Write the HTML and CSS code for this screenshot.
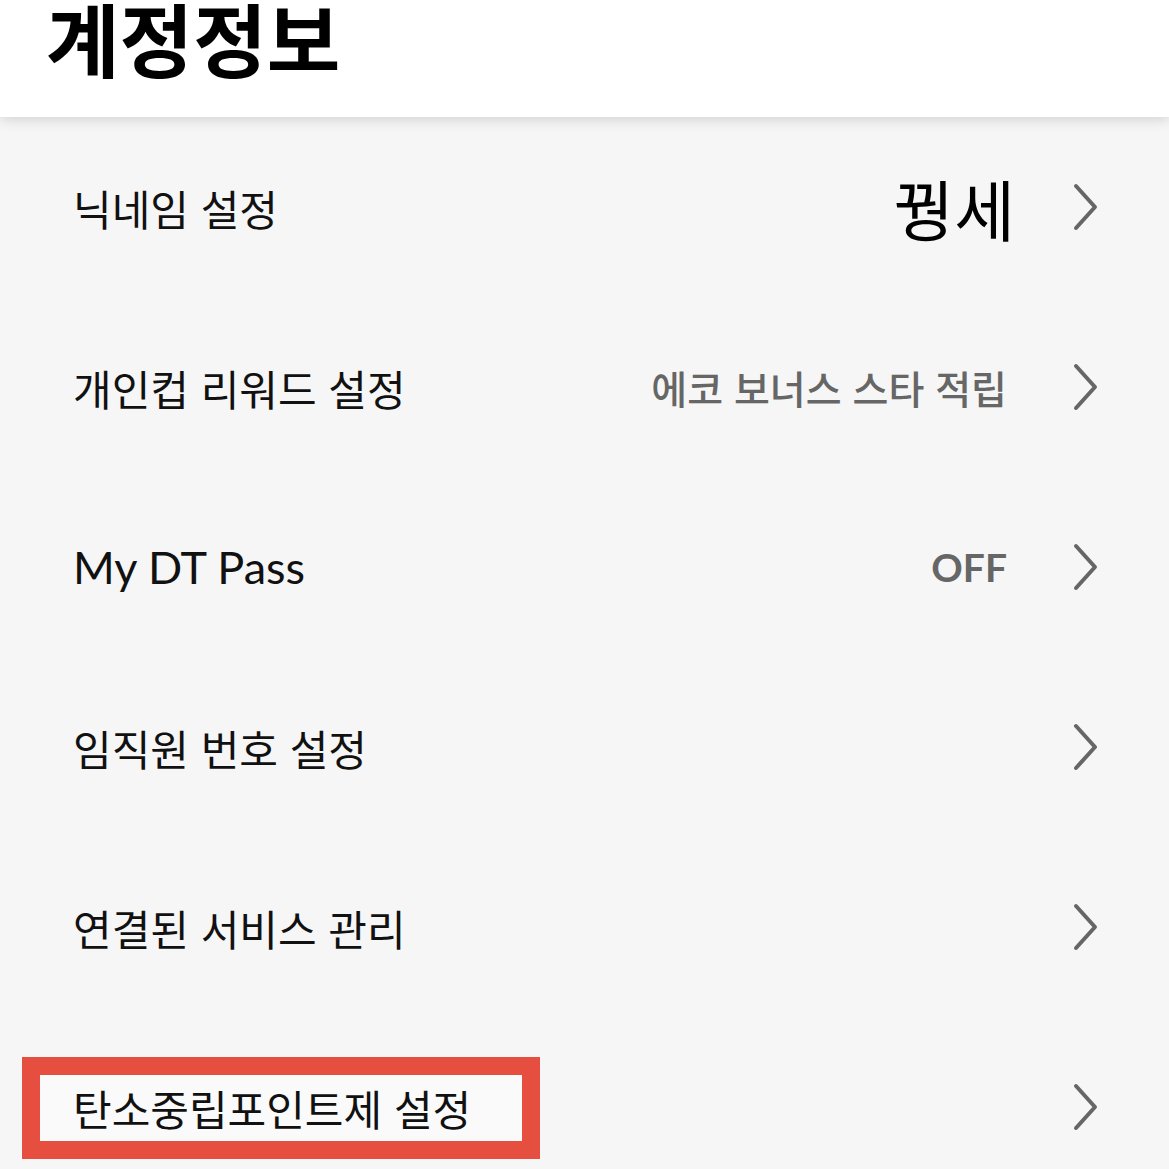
FILE: index.html
```html
<!DOCTYPE html>
<html lang="ko">
<head>
  <meta charset="UTF-8">
  <meta name="viewport" content="width=device-width, initial-scale=1.0">
  <title>계정정보</title>
  <link rel="stylesheet" href="styles.css">
</head>
<body>
  <header class="top">
    <h1 class="title">계정정보</h1>
  </header>
  <ul class="menu">
    <li class="row">
      <span class="label">닉네임 설정</span>
      <span class="value nick">꿩세</span>
      <svg class="chev" viewBox="0 0 26 48"><path d="M3 3 L22 24 L3 45"/></svg>
    </li>
    <li class="row">
      <span class="label">개인컵 리워드 설정</span>
      <span class="value">에코 보너스 스타 적립</span>
      <svg class="chev" viewBox="0 0 26 48"><path d="M3 3 L22 24 L3 45"/></svg>
    </li>
    <li class="row">
      <span class="label latin">My DT Pass</span>
      <span class="value bold">OFF</span>
      <svg class="chev" viewBox="0 0 26 48"><path d="M3 3 L22 24 L3 45"/></svg>
    </li>
    <li class="row">
      <span class="label">임직원 번호 설정</span>
      <svg class="chev" viewBox="0 0 26 48"><path d="M3 3 L22 24 L3 45"/></svg>
    </li>
    <li class="row">
      <span class="label">연결된 서비스 관리</span>
      <svg class="chev" viewBox="0 0 26 48"><path d="M3 3 L22 24 L3 45"/></svg>
    </li>
    <li class="row">
      <span class="label">탄소중립포인트제 설정</span>
      <svg class="chev" viewBox="0 0 26 48"><path d="M3 3 L22 24 L3 45"/></svg>
      <!-- annotation box -->
      <div class="mark"></div>
    </li>
  </ul>
</body>
</html>
```

FILE: styles.css
```css
html {
  font-family: "Noto Sans CJK KR", "Noto Sans", sans-serif;
}
body {
  margin: 0;
  padding: 0;
  background: #f6f6f6;
  overflow: hidden;
}
.top {
  position: relative;
  z-index: 1;
  height: 117px;
  overflow: hidden;
  background: #fff;
  box-shadow: 0 3px 12px rgba(0, 0, 0, 0.14);
}
.title {
  margin: -16px 0 0 46px;
  font-size: 80px;
  font-weight: 700;
  line-height: 1.3;
  color: #000;
  letter-spacing: 0;
}
.menu {
  list-style: none;
  margin: 0;
  padding: 0;
}
.row {
  position: relative;
  display: flex;
  align-items: center;
  height: 180px;
  padding: 0 70px 0 73px;
}
.label {
  flex: 1;
  font-size: 42px;
  color: #111;
  position: relative;
  z-index: 1;
}
.label.latin {
  font-family: Lato, "Noto Sans CJK KR", sans-serif;
  font-size: 45px;
}
.value {
  font-size: 39px;
  font-weight: 500;
  color: #666;
  margin-right: 66px;
}
.value.bold {
  font-family: Lato, "Noto Sans CJK KR", sans-serif;
  font-weight: 700;
}
.value.nick {
  font-size: 66px;
  font-weight: 400;
  color: #000;
  margin-right: 58px;
}
.chev {
  width: 26px;
  height: 48px;
  fill: none;
  stroke: #666;
  stroke-width: 4;
  stroke-linecap: round;
  stroke-linejoin: round;
}
.mark {
  position: absolute;
  left: 22px;
  top: 40px;
  width: 482px;
  height: 66px;
  border: 18px solid #e64e3f;
  background: #fafafa;
}
```
